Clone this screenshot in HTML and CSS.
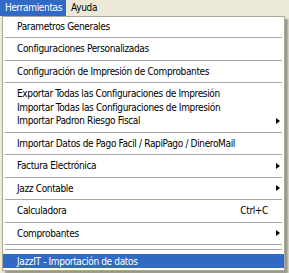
FILE: index.html
```html
<!DOCTYPE html>
<html>
  <head>
    <title>Herramientas</title>
    <meta charset="UTF-8" />
    <link rel="stylesheet" href="styles.css">
  </head>

  <body>
    <div class="menubar">
      <div class="menubar-item active">Herramientas</div>
      <div class="menubar-item">Ayuda</div>
    </div>
    <div class="dropdown">
      <div class="mi">Parametros Generales</div>
      <div class="sep"></div>
      <div class="mi">Configuraciones Personalizadas</div>
      <div class="sep"></div>
      <div class="mi">Configuración de Impresión de Comprobantes</div>
      <div class="sep"></div>
      <div class="mi">Exportar Todas las Configuraciones de Impresión</div>
      <div class="mi">Importar Todas las Configuraciones de Impresión</div>
      <div class="mi">Importar Padron Riesgo Fiscal<span class="arrow"></span></div>
      <div class="sep"></div>
      <div class="mi">Importar Datos de Pago Facil / RapiPago / DineroMail</div>
      <div class="sep"></div>
      <div class="mi">Factura Electrónica<span class="arrow"></span></div>
      <div class="sep"></div>
      <div class="mi">Jazz Contable<span class="arrow"></span></div>
      <div class="sep"></div>
      <div class="mi">Calculadora<span class="shortcut">Ctrl+C</span></div>
      <div class="sep"></div>
      <div class="mi">Comprobantes<span class="arrow"></span></div>
      <div class="sep"></div>
      <div class="sep tight"></div>
      <div class="mi selected">JazzIT - Importación de datos</div>
    </div>
  </body>
</html>
```

FILE: styles.css
```css
* {
  box-sizing: border-box;
  margin: 0;
  padding: 0;
}

body {
  width: 289px;
  height: 273px;
  overflow: hidden;
  background: #ece9d8;
  font-family: "DejaVu Sans", Verdana, sans-serif;
  font-stretch: condensed;
  font-size: 10px;
  letter-spacing: -0.35px;
  color: #000;
}

.menubar {
  height: 16px;
  display: flex;
  align-items: center;
  background: #ece9d8;
}

.menubar-item {
  height: 16px;
  line-height: 16px;
  padding: 0 5px;
}

.menubar-item.active {
  background: #316ac5;
  color: #fff;
  padding: 0 4px 0 5px;
}

.dropdown {
  width: 283px;
  margin-left: 2px;
  background: #fff;
  border: 1px solid #aca899;
  padding: 2.5px 0 2px;
  box-shadow: 3px 3px 2px rgba(0, 0, 0, 0.35);
}

.mi {
  height: 13.5px;
  display: flex;
  align-items: center;
  padding: 0 4px 0 14px;
  white-space: nowrap;
}

.mi.selected {
  height: 14px;
  background: #316ac5;
  color: #fff;
}

.arrow {
  margin-left: auto;
  width: 0;
  height: 0;
  border-left: 4px solid #000;
  border-top: 3.5px solid transparent;
  border-bottom: 3.5px solid transparent;
}

.shortcut {
  margin-left: auto;
  margin-right: 12px;
}

.sep {
  height: 9px;
  margin: 0 2px;
  padding-top: 4px;
}

.sep::after {
  content: "";
  display: block;
  height: 1px;
  background: #aca899;
}

.sep.tight {
  height: 5px;
  padding-top: 0;
}
```
